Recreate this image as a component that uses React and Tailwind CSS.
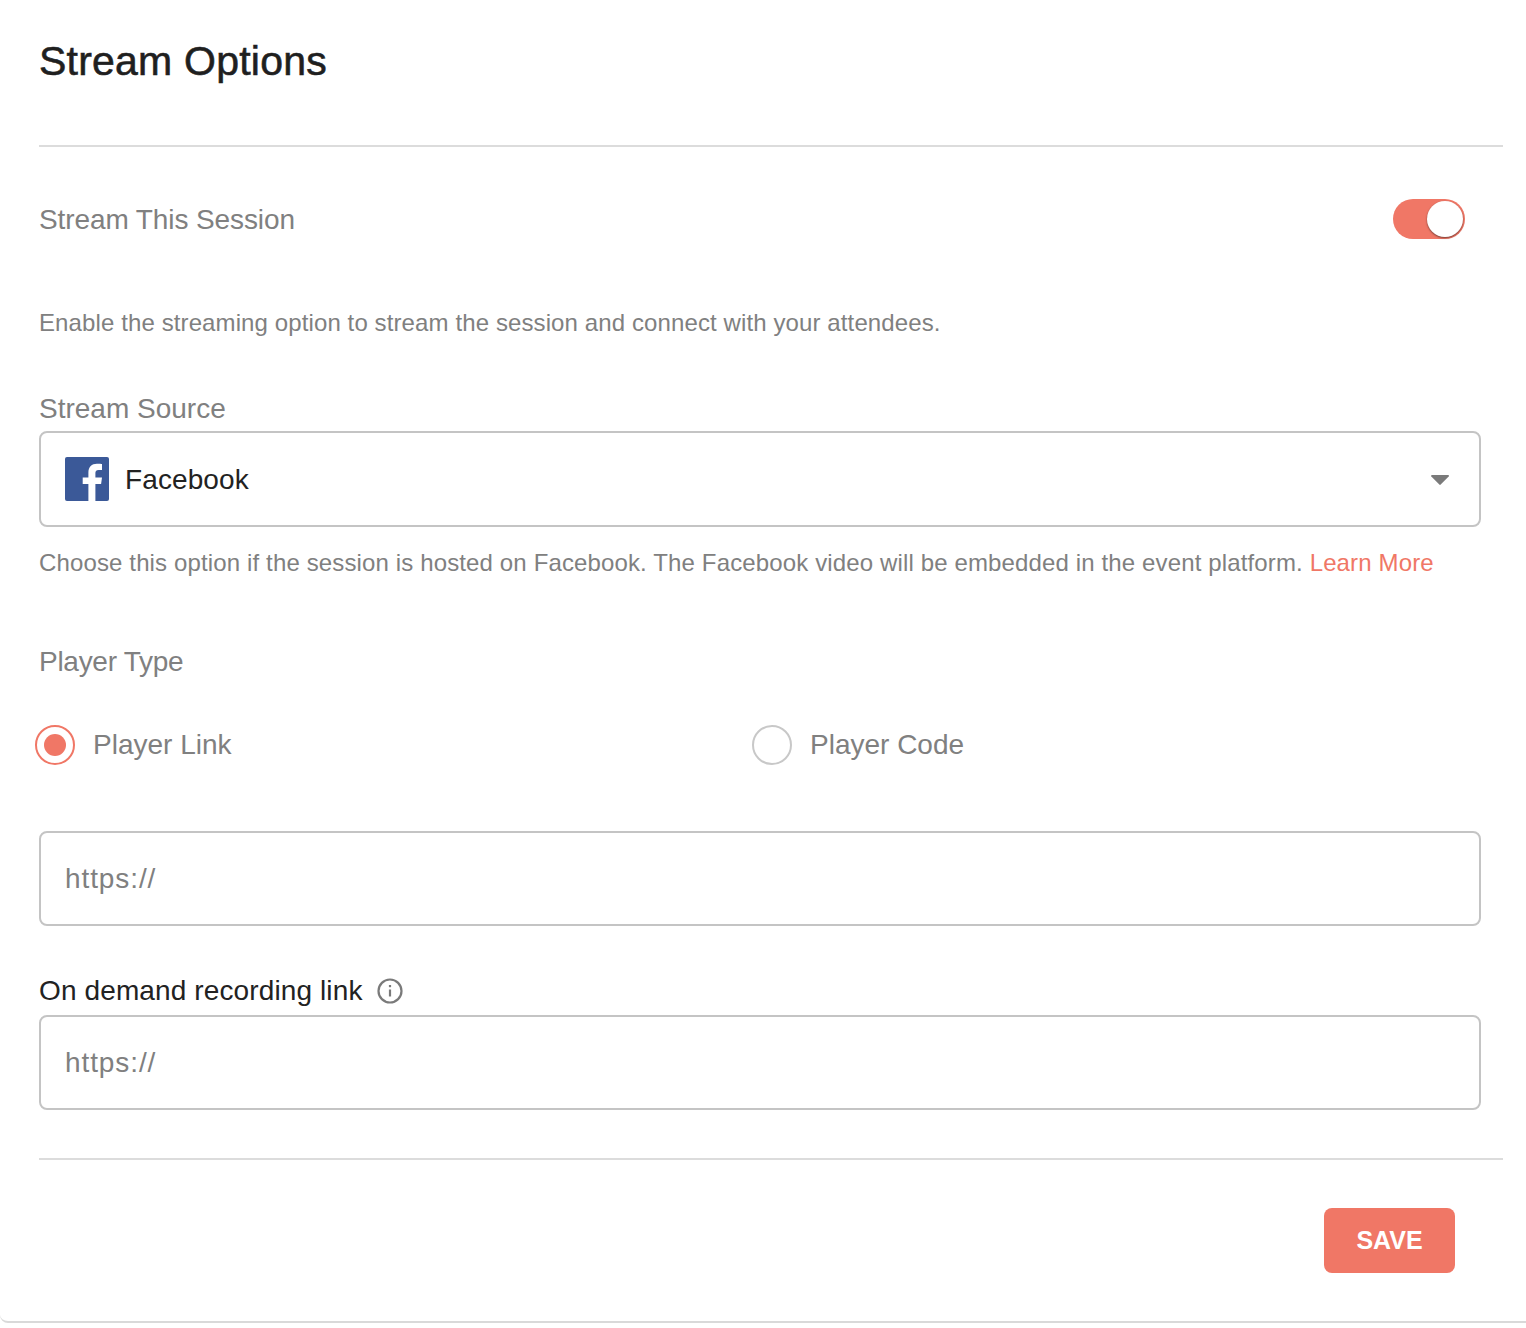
const FONT = "font-['Liberation_Sans',Arial,sans-serif]"

const FacebookLogo = () => (
  <svg width="44" height="44" viewBox="0 0 44 44" className="shrink-0">
    <rect width="44" height="44" rx="2" fill="#3b5998" />
    <path
      d="M30.4 44V27h5.700l.9-6.600h-6.600v-4.200c0-1.900.5-3.200 3.300-3.200H37V7c-.6-.1-2.700-.3-5.100-.3-5.100 0-8.500 3.100-8.500 8.700v5h-5.700V27h5.700v17z"
      fill="#fff"
    />
  </svg>
)

const Radio = ({ checked, label }) => (
  <div className="flex items-center gap-[18px]">
    {checked ? (
      <div className="w-10 h-10 rounded-full border-2 border-[#f07766] flex items-center justify-center">
        <div className="w-[22px] h-[22px] rounded-full bg-[#f07766]" />
      </div>
    ) : (
      <div className="w-10 h-10 rounded-full border-2 border-[#c8c8c8]" />
    )}
    <span className="text-[28px] leading-10 text-[#808080]">{label}</span>
  </div>
)

const LinkInput = ({ height }) => (
  <input
    type="text"
    placeholder="https://"
    className={`w-full ${height} px-[24px] border-2 border-[#c4c4c4] rounded-lg text-[28px] tracking-[0.9px] text-[#808080] placeholder:text-[#808080] outline-none`}
  />
)

const App = () => {
  return (
    <div className={`${FONT} w-[1526px] h-[1328px] bg-white`}>
      <div className="h-[1323px] border-b-2 border-[#d9d9d9] rounded-bl-lg pl-[39px] pr-[23px]">
        <h1 className="pt-[36px] h-[147px] text-[41px] leading-[50px] tracking-[0.22px] text-[#1f1f1f] [-webkit-text-stroke:0.6px_#1f1f1f] border-b-2 border-[#dcdcdc]">
          Stream Options
        </h1>

        <div className="pr-[22px]">
          <div className="flex items-center justify-between mt-[52px] h-10 pr-[16px]">
            <span className="pt-[2px] text-[28px] tracking-[-0.1px] text-[#808080]">Stream This Session</span>
            <button className="relative w-[72px] h-10 rounded-full bg-[#f07766]">
              <span className="absolute right-[2px] top-[2px] w-9 h-9 rounded-full bg-white shadow-[0_1px_2px_rgba(0,0,0,0.5)]" />
            </button>
          </div>

          <p className="mt-[69px] text-[24px] leading-[30px] tracking-[0.11px] text-[#808080]">
            Enable the streaming option to stream the session and connect with your attendees.
          </p>

          <label className="block mt-[51px] text-[28px] leading-[40px] text-[#808080]">Stream Source</label>
          <div className="mt-[2px] h-[96px] border-2 border-[#c4c4c4] rounded-lg flex items-center pl-[24px] pr-[30px]">
            <FacebookLogo />
            <span className="ml-4 pt-[1px] text-[28px] tracking-[0.1px] text-[#222222]">Facebook</span>
            <svg width="18" height="10" viewBox="0 0 18 10" className="ml-auto mt-[1px]">
              <path d="M1 0h16c.8 0 1.200.9.7 1.500L9.700 9.600c-.4.400-1 .4-1.400 0L.3 1.500C-.2.900.2 0 1 0z" fill="#7a7a7a" />
            </svg>
          </div>
          <p className="mt-[21px] text-[24px] leading-[30px] tracking-[0.135px] text-[#808080] whitespace-nowrap">
            Choose this option if the session is hosted on Facebook. The Facebook video will be embedded in the event platform.{" "}
            <a className="text-[#f07766]">Learn More</a>
          </p>

          <label className="block mt-[64px] text-[28px] leading-[40px] tracking-[-0.28px] text-[#808080]">Player Type</label>

          <div className="mt-[43px] -ml-1 grid grid-cols-[717px_1fr]">
            <Radio checked label="Player Link" />
            <Radio label="Player Code" />
          </div>

          <div className="mt-[66px]">
            <LinkInput height="h-[95px]" />
          </div>

          <div className="mt-[45px] flex items-center gap-[14px] h-10">
            <span className="text-[28px] tracking-[0.12px] text-[#222222]">On demand recording link</span>
            <svg width="26" height="26" viewBox="0 0 26 26" fill="none" stroke="#7a7a7a" strokeWidth="2.200">
              <circle cx="13" cy="13" r="11.500" />
              <path d="M13 11.500v7" />
              <path d="M13 7v2.200" />
            </svg>
          </div>
          <div className="mt-1">
            <LinkInput height="h-[95px]" />
          </div>
        </div>

        <div className="mt-[48px] border-t-2 border-[#dcdcdc] flex justify-end pt-[48px] pr-[48px]">
          <button className="w-[131px] h-[65px] rounded-lg bg-[#f07766] text-white text-[25px] font-bold">SAVE</button>
        </div>
      </div>
    </div>
  )
}

export default App
